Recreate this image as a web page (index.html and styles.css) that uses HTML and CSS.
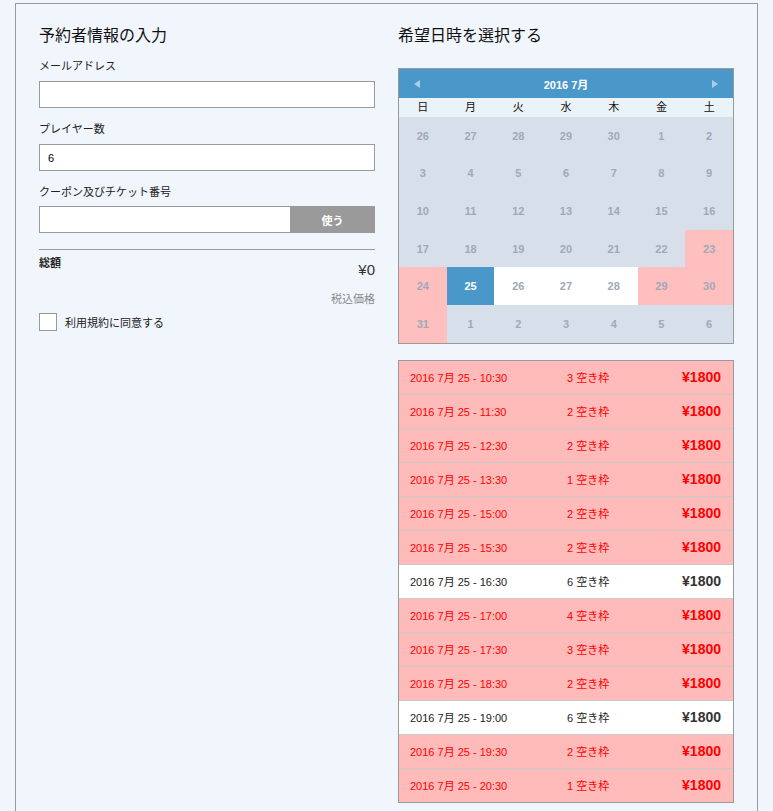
FILE: index.html
```html
<!DOCTYPE html>
<html lang="ja">
<head>
  <meta charset="UTF-8" />
  <title>予約</title>
  <link rel="stylesheet" href="styles.css">
</head>
<body>
  <div class="panel">
    <div class="col">
      <h2 class="heading">予約者情報の入力</h2>
      <label class="label first">メールアドレス</label>
      <input class="field" type="text" />
      <label class="label">プレイヤー数</label>
      <input class="field" type="text" value="6" />
      <label class="label">クーポン及びチケット番号</label>
      <div class="coupon">
        <input class="field coupon-input" type="text" />
        <button class="btn-use">使う</button>
      </div>
      <hr class="divider" />
      <div class="total">
        <span class="total-label">総額</span>
        <span class="total-value">¥0</span>
      </div>
      <div class="tax">税込価格</div>
      <div class="agree">
        <span class="checkbox"></span>
        <span>利用規約に同意する</span>
      </div>
    </div>

    <div class="col">
      <h2 class="heading">希望日時を選択する</h2>
      <div class="calendar">
        <div class="cal-head">
          <svg width="8" height="10" viewBox="0 0 8 10"><polygon points="7,1 7,9 1,5" fill="#a8cfe8"/></svg>
          <span>2016 7月</span>
          <svg width="8" height="10" viewBox="0 0 8 10"><polygon points="1,1 1,9 7,5" fill="#a8cfe8"/></svg>
        </div>
        <div class="weekdays">
          <span>日</span><span>月</span><span>火</span><span>水</span><span>木</span><span>金</span><span>土</span>
        </div>
        <div class="days">
          <span>26</span><span>27</span><span>28</span><span>29</span><span>30</span><span>1</span><span>2</span>
          <span>3</span><span>4</span><span>5</span><span>6</span><span>7</span><span>8</span><span>9</span>
          <span>10</span><span>11</span><span>12</span><span>13</span><span>14</span><span>15</span><span>16</span>
          <span>17</span><span>18</span><span>19</span><span>20</span><span>21</span><span>22</span><span class="full">23</span>
          <span class="full">24</span><span class="selected">25</span><span class="open">26</span><span class="open">27</span><span class="open">28</span><span class="full">29</span><span class="full">30</span>
          <span class="full">31</span><span>1</span><span>2</span><span>3</span><span>4</span><span>5</span><span>6</span>
        </div>
      </div>

      <div class="slots">
        <div class="slot few"><span>2016 7月 25 - 10:30</span><span>3 空き枠</span><span class="price">¥1800</span></div>
        <div class="slot few"><span>2016 7月 25 - 11:30</span><span>2 空き枠</span><span class="price">¥1800</span></div>
        <div class="slot few"><span>2016 7月 25 - 12:30</span><span>2 空き枠</span><span class="price">¥1800</span></div>
        <div class="slot few"><span>2016 7月 25 - 13:30</span><span>1 空き枠</span><span class="price">¥1800</span></div>
        <div class="slot few"><span>2016 7月 25 - 15:00</span><span>2 空き枠</span><span class="price">¥1800</span></div>
        <div class="slot few"><span>2016 7月 25 - 15:30</span><span>2 空き枠</span><span class="price">¥1800</span></div>
        <div class="slot"><span>2016 7月 25 - 16:30</span><span>6 空き枠</span><span class="price">¥1800</span></div>
        <div class="slot few"><span>2016 7月 25 - 17:00</span><span>4 空き枠</span><span class="price">¥1800</span></div>
        <div class="slot few"><span>2016 7月 25 - 17:30</span><span>3 空き枠</span><span class="price">¥1800</span></div>
        <div class="slot few"><span>2016 7月 25 - 18:30</span><span>2 空き枠</span><span class="price">¥1800</span></div>
        <div class="slot"><span>2016 7月 25 - 19:00</span><span>6 空き枠</span><span class="price">¥1800</span></div>
        <div class="slot few"><span>2016 7月 25 - 19:30</span><span>2 空き枠</span><span class="price">¥1800</span></div>
        <div class="slot few"><span>2016 7月 25 - 20:30</span><span>1 空き枠</span><span class="price">¥1800</span></div>
      </div>
    </div>
  </div>
</body>
</html>
```

FILE: styles.css
```css
body {
  margin: 0;
  background: #f1f5fc;
  font-family: 'Liberation Sans', 'Noto Sans CJK JP', sans-serif;
  font-size: 11px;
  color: #222;
}
.panel {
  margin: 3px 0 0 15px;
  width: 743px;
  min-height: 840px;
  border: 1px solid #9a9a9a;
  border-bottom: none;
  box-sizing: border-box;
  padding: 19px 23px 0 23px;
  display: grid;
  grid-template-columns: 336px 336px;
  column-gap: 23px;
  align-items: start;
}
.col {
  display: flex;
  flex-direction: column;
}
.heading {
  margin: 0;
  font-size: 16px;
  font-weight: normal;
  line-height: 26px;
  color: #111;
}
.label {
  display: block;
  line-height: 16px;
  margin: 13px 0 7px;
  font-size: 11px;
  color: #222;
}
.label.first {
  margin-top: 9px;
}
.field {
  height: 27px;
  width: 100%;
  box-sizing: border-box;
  border: 1px solid #9a9a9a;
  background: #fff;
  padding: 0 8px;
  font-size: 11px;
  font-family: inherit;
  outline: none;
  margin: 0;
}
.coupon {
  display: flex;
  margin-top: -1px;
}
.coupon-input {
  flex: 1;
  border-right: none;
}
.btn-use {
  width: 85px;
  height: 27px;
  border: none;
  background: #9a9a9a;
  color: #fff;
  font-weight: bold;
  font-size: 11px;
  font-family: inherit;
}
.divider {
  border: none;
  border-top: 1px solid #9a9a9a;
  margin: 16px 0 0;
}
.total {
  display: flex;
  justify-content: space-between;
  align-items: flex-start;
  margin-top: 6px;
}
.total-label {
  line-height: 14px;
  font-weight: bold;
}
.total-value {
  font-size: 15px;
  line-height: 20px;
  margin-top: 4px;
  color: #333;
}
.tax {
  text-align: right;
  color: #8a8a8a;
  margin-top: 12px;
  line-height: 14px;
}
.agree {
  display: flex;
  align-items: center;
  gap: 8px;
  margin-top: 7px;
}
.checkbox {
  width: 18px;
  height: 18px;
  box-sizing: border-box;
  border: 1px solid #9a9a9a;
  background: #fff;
}
.calendar {
  margin-top: 19px;
  border: 1px solid #9a9a9a;
}
.cal-head {
  height: 29px;
  background: #4a97c9;
  color: #fff;
  font-weight: bold;
  font-size: 11px;
  display: flex;
  align-items: center;
  justify-content: space-between;
  padding: 0 14px;
}
.weekdays {
  display: grid;
  grid-template-columns: repeat(7, 1fr);
  height: 19px;
  background: #eaf3f7;
  color: #111;
  text-align: center;
  line-height: 19px;
}
.days {
  display: grid;
  grid-template-columns: repeat(7, 1fr);
  grid-auto-rows: 37.6px;
  background: #d7dfeb;
}
.days span {
  display: flex;
  align-items: center;
  justify-content: center;
  color: #a0a9b7;
  font-weight: bold;
  font-size: 11px;
}
.days .full {
  background: #ffbfbf;
}
.days .open {
  background: #fff;
}
.days .selected {
  background: #4a97c9;
  color: #fff;
}
.slots {
  margin-top: 16px;
  border: 1px solid #9a9a9a;
  border-bottom: none;
  margin-bottom: 10px;
}
.slot {
  height: 34px;
  box-sizing: border-box;
  border-bottom: 1px solid #c9c9c9;
  display: grid;
  grid-template-columns: 157px 1fr auto;
  align-items: center;
  padding: 0 12px 0 11px;
  background: #fff;
  color: #222;
}
.slot .price {
  color: #333;
}
.slots .slot:last-child {
  border-bottom: 1px solid #9a9a9a;
}
.slot.few,
.slot.few .price {
  background: #ffbaba;
  color: #f00;
}
.price {
  font-size: 14px;
  font-weight: bold;
}
```
